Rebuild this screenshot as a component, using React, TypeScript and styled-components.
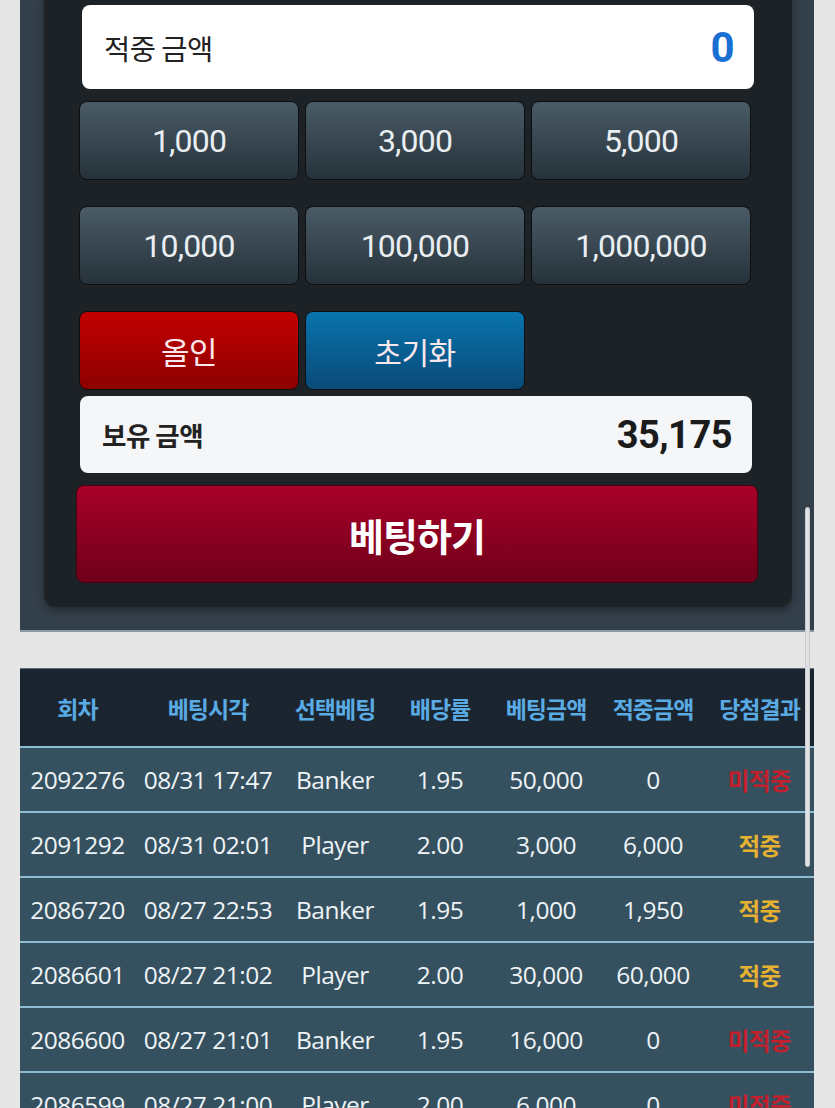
import React from "react";
import styled, { createGlobalStyle } from "styled-components";

const Global = createGlobalStyle`
  html, body { margin: 0; padding: 0; overflow: hidden; background: #e6e6e6; }
  body { font-family: "Noto Sans CJK KR", Roboto, sans-serif; }
  * { box-sizing: border-box; }
`;

const Page = styled.div`
  width: 835px;
  height: 1108px;
  padding: 0 21px 0 20px;
  overflow: hidden;
  position: relative;
`;

const OuterPanel = styled.section`
  margin-top: -36px;
  background: #333f4a;
  padding: 20px 22px 23px 24px;
  border-bottom: 2px solid #8a9ba8;
`;

const InnerPanel = styled.div`
  background: #1d2226;
  border-radius: 12px;
  padding: 21px 36px 24px 35px;
  box-shadow: 0 3px 8px rgba(0, 0, 0, 0.35);
  display: flex;
  flex-direction: column;
`;

const InfoBox = styled.div<{ $bg: string; $h: number; $ml: number; $mr: number; $mt: number }>`
  height: ${(p) => p.$h}px;
  margin: ${(p) => p.$mt}px ${(p) => p.$mr}px 0 ${(p) => p.$ml}px;
  background: ${(p) => p.$bg};
  border-radius: 8px;
  display: flex;
  align-items: center;
  justify-content: space-between;
  padding: 0 20px 0 22px;
`;

const InfoLabel = styled.span<{ $bold?: boolean; $size: number }>`
  font-family: "Noto Sans CJK KR", sans-serif;
  font-size: ${(p) => p.$size}px;
  font-weight: ${(p) => (p.$bold ? 700 : 400)};
  color: #222;
  letter-spacing: -0.5px;
`;

const InfoValue = styled.span<{ $color: string; $size: number }>`
  font-family: Roboto, "Liberation Sans", sans-serif;
  font-size: ${(p) => p.$size}px;
  font-weight: 700;
  color: ${(p) => p.$color};
  letter-spacing: -0.5px;
`;

const ButtonGrid = styled.div<{ $mt: number }>`
  display: grid;
  grid-template-columns: repeat(3, 220px);
  column-gap: 6px;
  margin-top: ${(p) => p.$mt}px;
`;

const ChipButton = styled.button<{ $variant?: "chip" | "red" | "blue" }>`
  height: 79px;
  border-radius: 8px;
  border: 1.5px solid #0c1013;
  background: ${(p) =>
    p.$variant === "red"
      ? "linear-gradient(#c30000, #8c0000)"
      : p.$variant === "blue"
      ? "linear-gradient(#0874ad, #0a4a78)"
      : "linear-gradient(#4a5b67, #26323a)"};
  color: ${(p) => (p.$variant === "chip" || !p.$variant ? "#e9eef2" : "#fbe8ec")};
  font-family: ${(p) =>
    p.$variant === "chip" || !p.$variant
      ? 'Roboto, "Liberation Sans", sans-serif'
      : '"Noto Sans CJK KR", sans-serif'};
  font-size: ${(p) => (p.$variant === "red" ? 31 : p.$variant === "blue" ? 30 : 32)}px;
  letter-spacing: ${(p) => (p.$variant === "chip" || !p.$variant ? "-0.8px" : "-0.5px")};
  display: flex;
  align-items: center;
  justify-content: center;
  padding: 0;
`;

const BetButton = styled.button`
  height: 98px;
  margin: 12px -2px 0 -3px;
  border-radius: 8px;
  border: 1.5px solid #4a0010;
  background: linear-gradient(#a8002a, #6f0019);
  color: #ffffff;
  font-family: "Noto Sans CJK KR", sans-serif;
  font-weight: 700;
  font-size: 38px;
  letter-spacing: -1px;
`;

const TableWrap = styled.div`
  margin-top: 36px;
  overflow: hidden;
`;

const Row = styled.div<{ $header?: boolean }>`
  display: grid;
  grid-template-columns: 115px 146px 108px 102px 110px 104px 109px;
  height: ${(p) => (p.$header ? 78 : 65)}px;
  background: ${(p) => (p.$header ? "#1b2530" : "#35505f")};
  border-top: ${(p) => (p.$header ? "1px solid #5d6c78" : "2px solid #8ebad2")};
  align-items: center;
`;

const Cell = styled.div<{ $header?: boolean; $color?: string }>`
  text-align: center;
  white-space: nowrap;
  font-family: ${(p) =>
    p.$header || p.$color ? '"Noto Sans CJK KR", sans-serif' : '"Open Sans", "Noto Sans CJK KR", sans-serif'};
  font-size: ${(p) => (p.$header ? 23 : p.$color ? 23.5 : 24.5)}px;
  font-weight: ${(p) => (p.$header || p.$color ? 700 : 400)};
  color: ${(p) => (p.$header ? "#5aaae4" : p.$color ? p.$color : "#eef3f6")};
  letter-spacing: ${(p) => (p.$header ? "-1px" : "-0.5px")};
`;

const ScrollThumb = styled.div`
  position: absolute;
  left: 805px;
  top: 507px;
  width: 5px;
  height: 360px;
  border-radius: 3px;
  background: #dfe2e5;
  border: 1px solid #c9cdd1;
`;

const HIT = "#e6b031";
const MISS = "#c2202c";

const rows: [string, string, string, string, string, string, boolean][] = [
  ["2092276", "08/31 17:47", "Banker", "1.95", "50,000", "0", false],
  ["2091292", "08/31 02:01", "Player", "2.00", "3,000", "6,000", true],
  ["2086720", "08/27 22:53", "Banker", "1.95", "1,000", "1,950", true],
  ["2086601", "08/27 21:02", "Player", "2.00", "30,000", "60,000", true],
  ["2086600", "08/27 21:01", "Banker", "1.95", "16,000", "0", false],
  ["2086599", "08/27 21:00", "Player", "2.00", "6,000", "0", false],
];

const headers = ["회차", "베팅시각", "선택베팅", "배당률", "베팅금액", "적중금액", "당첨결과"];

export default function App() {
  return (
    <>
      <Global />
      <Page>
        <OuterPanel>
          <InnerPanel>
            <InfoBox $bg="#ffffff" $h={84} $ml={3} $mr={2} $mt={0}>
              <InfoLabel $size={28.5}>적중 금액</InfoLabel>
              <InfoValue $color="#1a6fd2" $size={42}>0</InfoValue>
            </InfoBox>
            <ButtonGrid $mt={12}>
              <ChipButton>1,000</ChipButton>
              <ChipButton>3,000</ChipButton>
              <ChipButton>5,000</ChipButton>
            </ButtonGrid>
            <ButtonGrid $mt={26}>
              <ChipButton>10,000</ChipButton>
              <ChipButton>100,000</ChipButton>
              <ChipButton>1,000,000</ChipButton>
            </ButtonGrid>
            <ButtonGrid $mt={26}>
              <ChipButton $variant="red">올인</ChipButton>
              <ChipButton $variant="blue">초기화</ChipButton>
            </ButtonGrid>
            <InfoBox $bg="#f5f6f8" $h={77} $ml={1} $mr={4} $mt={6}>
              <InfoLabel $size={26.5} $bold>보유 금액</InfoLabel>
              <InfoValue $color="#1b1b1b" $size={38}>35,175</InfoValue>
            </InfoBox>
            <BetButton>베팅하기</BetButton>
          </InnerPanel>
        </OuterPanel>
        <TableWrap>
          <Row $header>
            {headers.map((h) => (
              <Cell $header key={h}>{h}</Cell>
            ))}
          </Row>
          {rows.map((r) => (
            <Row key={r[0]}>
              <Cell>{r[0]}</Cell>
              <Cell>{r[1]}</Cell>
              <Cell>{r[2]}</Cell>
              <Cell>{r[3]}</Cell>
              <Cell>{r[4]}</Cell>
              <Cell>{r[5]}</Cell>
              <Cell $color={r[6] ? HIT : MISS}>{r[6] ? "적중" : "미적중"}</Cell>
            </Row>
          ))}
        </TableWrap>
        <ScrollThumb />
      </Page>
    </>
  );
}
